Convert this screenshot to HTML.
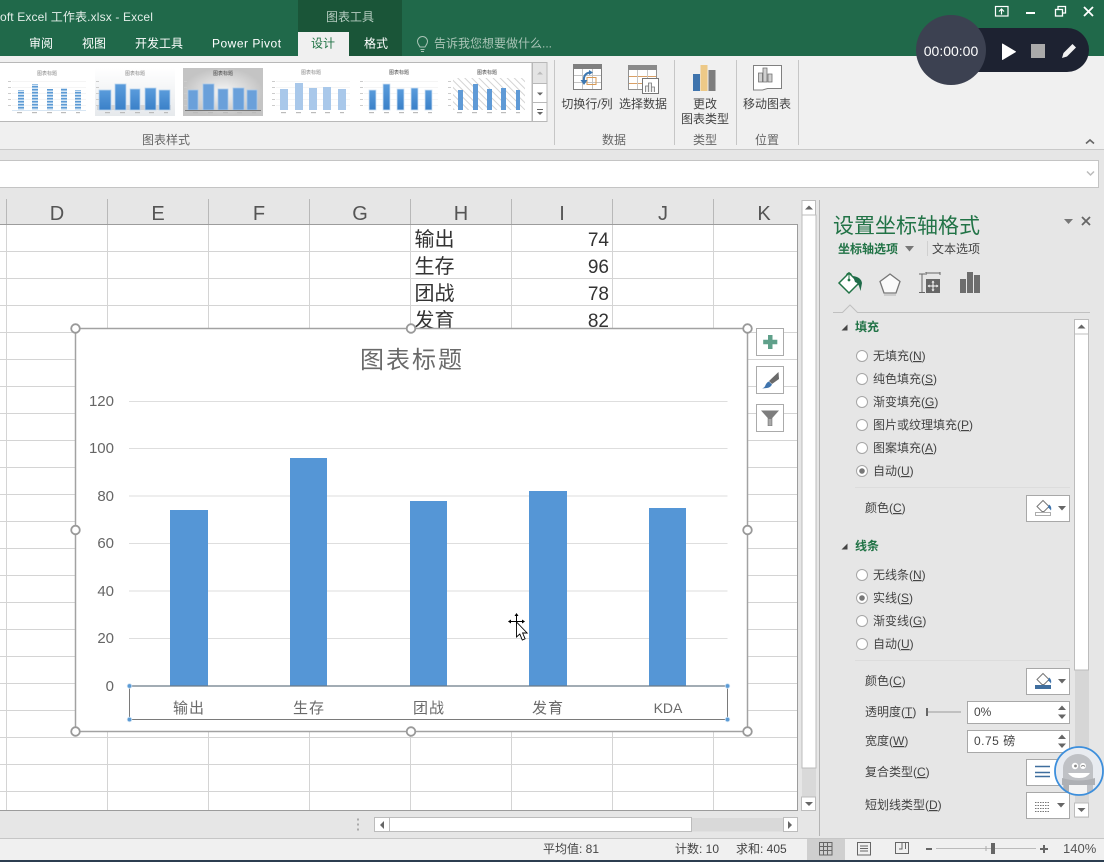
<!DOCTYPE html>
<html lang="zh-CN">
<head>
<meta charset="utf-8">
<title>Excel</title>
<style>
html,body{margin:0;padding:0;width:1104px;height:862px;overflow:hidden;background:#e6e6e6}
svg{display:block}
text{font-family:"Liberation Sans","Noto Sans CJK SC",sans-serif;font-size:12px;fill:#444}
.u{text-decoration:underline}
.b{font-weight:700;fill:#217346}
.h{font-size:20px;fill:#555;text-anchor:middle}
.c{font-size:20px;fill:#333}
.n{font-size:19px;fill:#333;text-anchor:end}
.y{font-size:15px;fill:#666;text-anchor:end}
.x{font-size:15px;fill:#6a6a6a;text-anchor:middle;letter-spacing:1px}
.t{fill:#fff;font-size:12px}
.m{text-anchor:middle}
.g{fill:#666;text-anchor:middle}
.tt{font-size:5px;fill:#888;text-anchor:middle}
</style>
</head>
<body>
<svg width="1104" height="862" viewBox="0 0 1104 862" xmlns="http://www.w3.org/2000/svg">
<defs>
<linearGradient id="bg2" x1="0" y1="0" x2="0" y2="1"><stop offset="0" stop-color="#fff"/><stop offset="1" stop-color="#e6e9ec"/></linearGradient>
<radialGradient id="bg3"><stop offset="0" stop-color="#f6f6f6"/><stop offset="1" stop-color="#c4c4c4"/></radialGradient>
<linearGradient id="bl" x1="0" y1="0" x2="0" y2="1"><stop offset="0" stop-color="#5a9cdc"/><stop offset="1" stop-color="#3a80c8"/></linearGradient>
<pattern id="st" width="3" height="3" patternUnits="userSpaceOnUse"><rect width="3" height="3" fill="#d5e6f5"/><rect width="3" height="1.5" fill="#5c9ad4"/></pattern>
<pattern id="ha" width="5" height="5" patternUnits="userSpaceOnUse" patternTransform="rotate(-45)"><rect width="5" height="5" fill="#fff"/><rect width="1" height="5" fill="#d4d4d4"/></pattern>
<g id="tk"><rect x="10" y="44" width="5" height="1.200" fill="#bbb"/><rect x="25" y="44" width="5" height="1.200" fill="#bbb"/><rect x="40" y="44" width="5" height="1.200" fill="#bbb"/><rect x="54" y="44" width="5" height="1.200" fill="#bbb"/><rect x="69" y="44" width="4" height="1.200" fill="#bbb"/><rect x="1" y="13" width="3" height="1" fill="#ccc"/><rect x="1" y="19" width="3" height="1" fill="#ccc"/><rect x="1" y="25" width="3" height="1" fill="#ccc"/><rect x="1" y="31" width="3" height="1" fill="#ccc"/><rect x="1" y="37" width="3" height="1" fill="#ccc"/></g>
<g id="bkt"><path d="M0 6 L6 0 L12 6 L7 11 L5 11 Z" fill="#fff" stroke="#777" stroke-width="1"/><path d="M12 4 Q15 6 14 10 Q12.500 8 11 7 Z" fill="#3f74ad"/></g>
</defs>

<!-- Title / tabs -->
<rect width="1104" height="56" fill="#20694a"/>
<rect x="298" width="104" height="56" fill="#1a5538"/>
<rect x="298" y="32" width="51" height="24" fill="#f0f0f0"/>
<text x="0" y="21" style="font-size:12px;fill:#e4eee9;letter-spacing:.14px">oft Excel 工作表.xlsx - Excel</text>
<text x="350" y="21" class="m" style="fill:#b5ccc0">图表工具</text>
<text x="29" y="47.500" class="t">审阅</text>
<text x="82" y="47.500" class="t">视图</text>
<text x="135" y="47.500" class="t">开发工具</text>
<text x="212" y="47.500" style="fill:#fff;font-size:12px;letter-spacing:.5px">Power Pivot</text>
<text x="311" y="47.500" style="fill:#217346">设计</text>
<text x="364" y="47.500" class="t">格式</text>
<path d="M420 47c-1-2-2.500-3-2.500-5.500a5 5 0 0 1 10 0c0 2.500-1.500 3.500-2.500 5.500zM420.500 49.500h4M421 51.500h3" fill="none" stroke="#a9c4b6" stroke-width="1"/>
<text x="434" y="47.500" style="fill:#a9c4b6">告诉我您想要做什么...</text>

<!-- Window controls -->
<g fill="none" stroke="#fff" stroke-width="1.200">
<rect x="995.500" y="6.500" width="12.500" height="9.500"/>
<path d="M1001.500 14.500v-5M999 11.500l2.500-2.500 2.500 2.500"/>
</g>
<path d="M1026 13h9" stroke="#fff" stroke-width="2"/>
<g fill="none" stroke="#fff" stroke-width="1.300"><rect x="1055.500" y="9.500" width="7" height="6.500"/><path d="M1058 9V6.500h7.500V13h-3"/></g>
<path d="M1084 7l9 9M1093 7l-9 9" stroke="#fff" stroke-width="1.800" fill="none"/>

<!-- Ribbon -->
<rect y="56" width="1104" height="94" fill="#f0f0f0"/>
<rect y="149" width="1104" height="1" fill="#c9c9c9"/>
<rect y="150" width="1104" height="50" fill="#e6e6e6"/>
<rect x="-2" y="160.500" width="1100.500" height="27" fill="#fff" stroke="#c4c4c4"/>
<path d="M1087 171.500l3.500 3.500 3.500-3.500" fill="none" stroke="#bbb" stroke-width="1.500"/>

<rect x="-2" y="62.500" width="534" height="59" fill="#fff" stroke="#b8b8b8"/>
<!-- thumb 1 -->
<g transform="translate(7 68)"><rect width="80" height="48" fill="#fff"/><path d="M5 13.500h74M5 19.500h74M5 25.500h74M5 31.500h74M5 37.500h74" stroke="#f5f5f5"/><text x="40" y="7" class="tt">图表标题</text>
<rect x="11" y="22" width="6" height="20" fill="url(#st)"/><rect x="25" y="16" width="6" height="26" fill="url(#st)"/><rect x="40" y="21" width="6" height="21" fill="url(#st)"/><rect x="54" y="20" width="6" height="22" fill="url(#st)"/><rect x="68" y="22" width="6" height="20" fill="url(#st)"/><rect x="5" y="42" width="74" height=".8" fill="#cfe0f0"/><use href="#tk"/></g>
<!-- thumb 2 -->
<g transform="translate(95 68)"><rect width="80" height="48" fill="url(#bg2)"/><rect x="2" y="37" width="74" height="5" fill="#c4c4c4" opacity=".6"/>
<text x="40" y="7" class="tt">图表标题</text>
<g stroke="#b9d4ee" stroke-width=".8"><rect x="4" y="22" width="12" height="20" fill="url(#bl)"/><rect x="20" y="16" width="11" height="26" fill="url(#bl)"/><rect x="35" y="21" width="10" height="21" fill="url(#bl)"/><rect x="50" y="20" width="11" height="22" fill="url(#bl)"/><rect x="64" y="22" width="11" height="20" fill="url(#bl)"/></g><use href="#tk"/></g>
<!-- thumb 3 -->
<g transform="translate(183 68)"><rect width="80" height="48" fill="url(#bg3)"/><text x="40" y="7" class="tt" style="fill:#444">图表标题</text>
<g stroke="#a9c9ea" stroke-width=".8"><rect x="5" y="22" width="10" height="20" fill="#6aa0da"/><rect x="20" y="16" width="11" height="26" fill="#6aa0da"/><rect x="35" y="21" width="10" height="21" fill="#6aa0da"/><rect x="50" y="20" width="11" height="22" fill="#6aa0da"/><rect x="64" y="22" width="10" height="20" fill="#6aa0da"/></g><rect x="2" y="42" width="76" height="1" fill="#777"/><use href="#tk"/></g>
<!-- thumb 4 -->
<g transform="translate(271 68)"><rect width="80" height="48" fill="#fff"/><path d="M5 13.500h74M5 19.500h74M5 25.500h74M5 31.500h74M5 37.500h74" stroke="#f5f5f5"/><text x="40" y="6" class="tt">图表标题</text>
<rect x="9" y="21" width="8" height="21" fill="#a9c8ea"/><rect x="24" y="15" width="8" height="27" fill="#a9c8ea"/><rect x="38" y="20" width="8" height="22" fill="#a9c8ea"/><rect x="52" y="19" width="8" height="23" fill="#a9c8ea"/><rect x="67" y="21" width="8" height="21" fill="#a9c8ea"/><use href="#tk"/></g>
<!-- thumb 5 -->
<g transform="translate(359 68)"><rect width="80" height="48" fill="#fff"/><path d="M5 13.500h74M5 19.500h74M5 25.500h74M5 31.500h74M5 37.500h74" stroke="#f5f5f5"/><text x="40" y="6" class="tt" style="fill:#444">图表标题</text>
<g stroke="#cfe2f4" stroke-width=".8"><rect x="10" y="22" width="7" height="20" fill="url(#bl)"/><rect x="24" y="16" width="7" height="26" fill="url(#bl)"/><rect x="38" y="21" width="7" height="21" fill="url(#bl)"/><rect x="52" y="20" width="7" height="22" fill="url(#bl)"/><rect x="66" y="22" width="7" height="20" fill="url(#bl)"/></g><use href="#tk"/></g>
<!-- thumb 6 -->
<g transform="translate(447 68)"><rect width="80" height="48" fill="#fff"/><rect x="6" y="10" width="72" height="32" fill="url(#ha)"/><text x="40" y="6" class="tt" style="fill:#444">图表标题</text>
<rect x="11" y="22" width="5" height="20" fill="#5f9ad6"/><rect x="26" y="16" width="5" height="26" fill="#5f9ad6"/><rect x="40" y="21" width="5" height="21" fill="#5f9ad6"/><rect x="54" y="20" width="5" height="22" fill="#5f9ad6"/><rect x="69" y="22" width="4" height="20" fill="#5f9ad6"/><use href="#tk"/></g>

<rect x="532.500" y="62.500" width="14.500" height="21" fill="#e4e4e4" stroke="#b8b8b8"/>
<rect x="532.500" y="83.500" width="14.500" height="19" fill="#fff" stroke="#b8b8b8"/>
<rect x="532.500" y="102.500" width="14.500" height="19" fill="#fff" stroke="#b8b8b8"/>
<path d="M537 74.500l3-3 3 3z" fill="#bbb"/><path d="M537 92.500h6l-3 3z" fill="#666"/><path d="M537 109.500h6" stroke="#666"/><path d="M537 112h6l-3 3z" fill="#666"/>
<text x="166" y="144" class="g">图表样式</text>

<path d="M554.500 60v85M674.500 60v85M736.500 60v85M798.500 60v85" stroke="#c6c6c6"/>
<!-- icon: switch -->
<rect x="573.500" y="64.500" width="28" height="25" fill="#fff" stroke="#808080"/><rect x="573" y="64" width="29" height="5" fill="#7f7f7f"/>
<path d="M574 75.500h27M574 82.500h27M582.500 69v20M592.500 69v20" stroke="#c4c4c4"/><path d="M587 77.500h9v7h-9z" fill="none" stroke="#d99a55"/>
<path d="M590 72.500q-7 1-6 9" fill="none" stroke="#3d77b0" stroke-width="2"/><path d="M580.500 80l3.500 5 3.500-5zM589 70v5l4-2.500z" fill="#3d77b0"/>
<!-- icon: select data -->
<rect x="628.500" y="65.500" width="28" height="24" fill="#fff" stroke="#909090"/><rect x="628" y="65" width="29" height="5" fill="#8a8a8a"/>
<path d="M629 76.500h27M629 83.500h27" stroke="#d9a066"/><path d="M637.500 70v19M647.500 70v19" stroke="#c6c6c6"/>
<rect x="642.500" y="78.500" width="16" height="15" fill="#fff" stroke="#777"/><path d="M645.500 92v-6h3v6M648.500 92v-9h3v9M651.500 92v-5h3v5" fill="#eee" stroke="#777" stroke-width=".8"/>
<!-- icon: change type -->
<rect x="693" y="74" width="7" height="17" fill="#3f74ad"/><rect x="700.500" y="65" width="7" height="26" fill="#edc987"/><rect x="708.500" y="70" width="7" height="21" fill="#7d7d7d"/>
<!-- icon: move chart -->
<path d="M753.500 65.500h28v23h-14l-5 1.500h-9z" fill="#fff" stroke="#808080"/><path d="M758.500 82v-9h4v9zM763 82V68h4v14zM768 82v-8h4v8z" fill="#d0d0d0" stroke="#707070" stroke-width=".8"/>

<text x="587" y="108" class="m">切换行/列</text>
<text x="643" y="108" class="m">选择数据</text>
<text x="705" y="108" class="m">更改</text>
<text x="705" y="123" class="m">图表类型</text>
<text x="767" y="108" class="m">移动图表</text>
<text x="614" y="144" class="g">数据</text>
<text x="705" y="144" class="g">类型</text>
<text x="767" y="144" class="g">位置</text>
<path d="M1086 143.500l4-3.500 4 3.500" fill="none" stroke="#666" stroke-width="1.600"/>

<!-- Sheet grid -->
<rect x="0" y="224" width="797.500" height="586" fill="#fff"/>
<path d="M0 251.500h797M0 278.500h797M0 305.500h797M0 332.500h797M0 359.500h797M0 386.500h797M0 413.500h797M0 440.500h797M0 467.500h797M0 494.500h797M0 521.500h797M0 548.500h797M0 575.500h797M0 602.500h797M0 629.500h797M0 656.500h797M0 683.500h797M0 710.500h797M0 737.500h797M0 764.500h797M0 791.500h797M6.500 224v586M107.500 224v586M208.500 224v586M309.500 224v586M410.500 224v586M511.500 224v586M612.500 224v586M713.500 224v586" stroke="#d4d4d4"/>
<path d="M6.500 199v25M107.500 199v25M208.500 199v25M309.500 199v25M410.500 199v25M511.500 199v25M612.500 199v25M713.500 199v25" stroke="#b8b8b8"/>
<path d="M0 224.500h797.500V810.500H0" fill="none" stroke="#9c9c9c"/>
<text x="57" y="220" class="h">D</text><text x="158" y="220" class="h">E</text><text x="259" y="220" class="h">F</text><text x="360" y="220" class="h">G</text><text x="461" y="220" class="h">H</text><text x="562" y="220" class="h">I</text><text x="663" y="220" class="h">J</text><text x="764" y="220" class="h">K</text>
<text x="414.500" y="246" class="c">输出</text><text x="414.500" y="273" class="c">生存</text><text x="414.500" y="300" class="c">团战</text><text x="414.500" y="327" class="c">发育</text>
<text x="609" y="246" class="n">74</text><text x="609" y="273" class="n">96</text><text x="609" y="300" class="n">78</text><text x="609" y="327" class="n">82</text>

<!-- Chart -->
<rect x="75.500" y="328.500" width="672" height="403" fill="#fff" stroke="#a2a2a2" stroke-width="1.500"/>
<path d="M129 401.500h598.500M129 448.500h598.500M129 496h598.500M129 543.500h598.500M129 591h598.500M129 638.500h598.500" stroke="#dedede"/>
<text x="412" y="368" style="font-size:24px;fill:#6a6a6a;text-anchor:middle;letter-spacing:2px">图表标题</text>
<text x="114" y="406" class="y">120</text><text x="114" y="453" class="y">100</text><text x="114" y="501" class="y">80</text><text x="114" y="548" class="y">60</text><text x="114" y="596" class="y">40</text><text x="114" y="643" class="y">20</text><text x="114" y="691" class="y">0</text>
<g fill="#5596d6"><rect x="170" y="510" width="38" height="176"/><rect x="290" y="458" width="37" height="228"/><rect x="410" y="501" width="37" height="185"/><rect x="529" y="491" width="38" height="195"/><rect x="649" y="508" width="37" height="178"/></g>
<rect x="129.500" y="686" width="598" height="33.500" fill="none" stroke="#7a7a7a"/>
<path d="M129 686h599" stroke="#6b7a88" stroke-width="1.200"/>
<g fill="#5b9bd5" stroke="#cfe2f3" stroke-width=".8"><circle cx="129.500" cy="686" r="2.300"/><circle cx="727.500" cy="686" r="2.300"/><circle cx="129.500" cy="719.500" r="2.300"/><circle cx="727.500" cy="719.500" r="2.300"/></g>
<text x="189" y="713" class="x">输出</text><text x="309" y="713" class="x">生存</text><text x="429" y="713" class="x">团战</text><text x="548" y="713" class="x">发育</text><text x="668" y="713" style="font-size:14px;fill:#6a6a6a;text-anchor:middle">KDA</text>
<g fill="#fff" stroke="#999" stroke-width="1.800"><circle cx="75.500" cy="328.500" r="4.300"/><circle cx="411" cy="328.500" r="4.300"/><circle cx="747.500" cy="328.500" r="4.300"/><circle cx="75.500" cy="530" r="4.300"/><circle cx="747.500" cy="530" r="4.300"/><circle cx="75.500" cy="731.500" r="4.300"/><circle cx="411" cy="731.500" r="4.300"/><circle cx="747.500" cy="731.500" r="4.300"/></g>

<!-- Chart side buttons -->
<g fill="#fff" stroke="#ababab"><rect x="756.500" y="328.500" width="27" height="27"/><rect x="756.500" y="366.500" width="27" height="27"/><rect x="756.500" y="404.500" width="27" height="27"/></g>
<path d="M768 335h4.500v4.800h4.800v4.400h-4.800v4.800H768v-4.800h-4.800v-4.400h4.800z" fill="#5fa08a"/>
<path d="M778.500 372l.5 7-7 5-3-3z" fill="#6a6a6a"/><path d="M769 381.500l3 3q-1.500 3-5 3.500l-5 .5q3-1 3.500-3.500 1.500-3 3.500-3.500z" fill="#3f74ad"/>
<path d="M761 410.500h18l-6.700 7.500v8h-4.600v-8z" fill="#7d7d7d"/><path d="M768.500 419v6.500h3V419" fill="#aaa"/>

<!-- Cursor -->
<path d="M516.500 614v12M508.500 621.500h16" stroke="#000" stroke-width="1"/>
<path d="M516.500 613l-2 3h4zM508 621.500l3-2v4zM525 621.500l-3-2v4z" fill="#000"/>
<path d="M516.500 622v15l3.300-3 2.500 6 2.800-1.200-2.500-5.800h4.500z" fill="#fff" stroke="#000" stroke-width=".9"/>

<!-- V scrollbar -->
<rect x="802" y="200" width="14" height="610" fill="#d9d9d9"/>
<rect x="802" y="215" width="14" height="553" fill="#fff" stroke="#bcbcbc"/>
<rect x="802" y="200.500" width="13.500" height="14.500" fill="#fff" stroke="#bcbcbc"/>
<rect x="801.500" y="797" width="14" height="13.500" fill="#fff" stroke="#bcbcbc"/>
<path d="M805 209.500l4-4 4 4z" fill="#666"/><path d="M805 802h8l-4 4z" fill="#666"/>

<!-- Bottom bars -->
<rect y="811" width="819" height="27" fill="#e6e6e6"/>
<rect y="838" width="1104" height="22" fill="#f0f0f0"/>
<rect y="838" width="1104" height="1" fill="#c6c6c6"/>
<path d="M358 818.500v2M358 823.500v2M358 828.500v2" stroke="#aaa" stroke-width="2"/>
<rect x="375" y="818" width="422.500" height="13.500" fill="#d9d9d9"/>
<rect x="389.500" y="817.500" width="302" height="14" fill="#fff" stroke="#bcbcbc"/>
<rect x="374.500" y="817.500" width="15" height="14" fill="#fff" stroke="#bcbcbc"/>
<rect x="783.500" y="817.500" width="14" height="14" fill="#fff" stroke="#bcbcbc"/>
<path d="M384 821v8l-4-4z" fill="#666"/><path d="M788 821v8l4-4z" fill="#666"/>

<!-- Panel -->
<rect x="820" y="199" width="284" height="639" fill="#e6e6e6"/>
<path d="M819.500 200v636" stroke="#b4b4b4"/>
<text x="833" y="233" style="font-size:21px;fill:#217346">设置坐标轴格式</text>
<path d="M1064 219h9l-4.500 5z" fill="#777"/><path d="M1082 217l8 8M1090 217l-8 8" stroke="#666" stroke-width="1.800"/>
<text x="838" y="253" class="b">坐标轴选项</text>
<path d="M905 246h9l-4.500 5.500z" fill="#777"/><path d="M927.500 241v15" stroke="#d0d0d0"/>
<text x="932" y="253">文本选项</text>

<!-- Panel tab icons -->
<path d="M839 283l10-10 10 10-10 10z" fill="#fff" stroke="#217346" stroke-width="1.500"/>
<path d="M849 272v7" stroke="#217346"/><circle cx="849" cy="280" r="1.400" fill="#217346"/><path d="M846.500 275a2.600 2.600 0 0 1 5 0" fill="none" stroke="#217346"/>
<path d="M853 276q8 1 9 7l-1.500 8-1.500-5q-1-3-4-4z" fill="#1f6b49"/>
<path d="M890 274l10 7.500-4 11.500h-12l-4-11.500z" fill="#fafafa" stroke="#777" stroke-width="1.300"/><path d="M884 295h12" stroke="#ccc" stroke-width="2"/>
<path d="M919 274h6M919 292.500h6M922 274v18.500M926 273h14M926 272v3M940 272v3" fill="none" stroke="#666"/>
<rect x="926" y="279" width="14" height="14" fill="#666"/><path d="M933 281.500v9M928.500 286h9" stroke="#fff"/><path d="M933 280.500l-1.500 2h3zM933 291.500l-1.500-2h3zM927.500 286l2-1.500v3zM938.500 286l-2-1.500v3z" fill="#fff"/>
<path d="M960 279h6v14h-6zM967 272h6v21h-6zM974 275h6v18h-6z" fill="#6d6d6d"/>
<path d="M833 312.500h9.500l7.500-7.500 7.500 7.500H1090" fill="none" stroke="#c0c0c0"/>

<!-- Panel scrollbar -->
<rect x="1075" y="320" width="14" height="498" fill="#d6d6d6"/>
<rect x="1074.500" y="334" width="14" height="336" fill="#fff" stroke="#bcbcbc"/>
<rect x="1074.500" y="319.500" width="14" height="14.500" fill="#fff" stroke="#bcbcbc"/>
<rect x="1074.500" y="803" width="14" height="14" fill="#fff" stroke="#bcbcbc"/>
<path d="M1077.500 328.500l4-4 4 4z" fill="#666"/><path d="M1077.500 808h8l-4 4z" fill="#666"/>

<!-- Fill section -->
<path d="M841.500 330.500h6v-6z" fill="#444"/>
<text x="855" y="331" class="b">填充</text>
<g fill="#fff" stroke="#a6a6a6"><circle cx="862" cy="356" r="5.500"/><circle cx="862" cy="379" r="5.500"/><circle cx="862" cy="402" r="5.500"/><circle cx="862" cy="425" r="5.500"/><circle cx="862" cy="448" r="5.500"/><circle cx="862" cy="471" r="5.500"/><circle cx="862" cy="575" r="5.500"/><circle cx="862" cy="598" r="5.500"/><circle cx="862" cy="621" r="5.500"/><circle cx="862" cy="644" r="5.500"/></g>
<circle cx="862" cy="471" r="2.800" fill="#777"/><circle cx="862" cy="598" r="2.800" fill="#777"/>
<text x="873" y="360">无填充(<tspan class="u">N</tspan>)</text>
<text x="873" y="383">纯色填充(<tspan class="u">S</tspan>)</text>
<text x="873" y="406">渐变填充(<tspan class="u">G</tspan>)</text>
<text x="873" y="429">图片或纹理填充(<tspan class="u">P</tspan>)</text>
<text x="873" y="452">图案填充(<tspan class="u">A</tspan>)</text>
<text x="873" y="475">自动(<tspan class="u">U</tspan>)</text>
<path d="M855 487.500h215M855 660.500h215" stroke="#dcdcdc"/>
<text x="865" y="512">颜色(<tspan class="u">C</tspan>)</text>
<rect x="1026.500" y="495.500" width="43" height="26" fill="#fff" stroke="#a8a8a8"/>
<use href="#bkt" transform="translate(1037 500.500)"/><rect x="1035.500" y="512.500" width="15" height="3" fill="#fff" stroke="#999" stroke-width=".8"/>
<path d="M1058 506h8l-4 4.500z" fill="#666"/>

<!-- Line section -->
<path d="M841.500 549.500h6v-6z" fill="#444"/>
<text x="855" y="550" class="b">线条</text>
<text x="873" y="579">无线条(<tspan class="u">N</tspan>)</text>
<text x="873" y="602">实线(<tspan class="u">S</tspan>)</text>
<text x="873" y="625">渐变线(<tspan class="u">G</tspan>)</text>
<text x="873" y="648">自动(<tspan class="u">U</tspan>)</text>
<text x="865" y="685">颜色(<tspan class="u">C</tspan>)</text>
<rect x="1026.500" y="668.500" width="43" height="26" fill="#fff" stroke="#a8a8a8"/>
<use href="#bkt" transform="translate(1037 673.500)"/><rect x="1035" y="685" width="16" height="4" fill="#3f6e9e"/>
<path d="M1058 679h8l-4 4.500z" fill="#666"/>
<text x="865" y="716">透明度(<tspan class="u">T</tspan>)</text>
<path d="M927 708v8" stroke="#666" stroke-width="2"/><path d="M928 712h33" stroke="#999"/>
<rect x="967.500" y="701.500" width="102" height="22" fill="#fff" stroke="#a8a8a8"/>
<text x="974" y="716">0%</text>
<path d="M1058 710l4-4.500 4 4.500zM1058 714.500h8l-4 4.500z" fill="#666"/>
<text x="865" y="745">宽度(<tspan class="u">W</tspan>)</text>
<rect x="967.500" y="730.500" width="102" height="22" fill="#fff" stroke="#a8a8a8"/>
<text x="974" y="745" style="letter-spacing:.5px">0.75 磅</text>
<path d="M1058 739l4-4.500 4 4.500zM1058 743.500h8l-4 4.500z" fill="#666"/>
<text x="865" y="776">复合类型(<tspan class="u">C</tspan>)</text>
<rect x="1026.500" y="759.500" width="43" height="26" fill="#fff" stroke="#a8a8a8"/>
<path d="M1035 766.500h15M1035 772.500h15M1035 776.500h15" stroke="#3f6e9e" stroke-width="1.500"/>
<text x="865" y="809">短划线类型(<tspan class="u">D</tspan>)</text>
<rect x="1026.500" y="792.500" width="43" height="26" fill="#fff" stroke="#a8a8a8"/>
<path d="M1035 802.500h15M1035 805.500h15M1035 808.500h15M1035 811.500h15" stroke="#777" stroke-dasharray="1.500 1"/>
<path d="M1057 803h8l-4 4.500z" fill="#666"/>

<!-- Avatar -->
<clipPath id="av"><circle cx="1079" cy="771" r="23.500"/></clipPath>
<g clip-path="url(#av)"><rect x="1050" y="745" width="60" height="55" fill="#e8ebf0"/>
<path d="M1063 800v-32a15 14 0 0 1 30 0v32z" fill="#bfc1c5"/>
<circle cx="1075" cy="766" r="3.200" fill="#fff"/><circle cx="1083" cy="766" r="3" fill="#fff"/><circle cx="1075.500" cy="766" r="1.400" fill="#888"/><path d="M1081 766.500q2-2 4 0" stroke="#888" fill="none"/>
<path d="M1068 773h22q-3 5-11 5t-11-5z" fill="#fff"/>
<path d="M1062 778q17 5 33 0v7h-33z" fill="#aeb0b4"/><rect x="1068" y="785" width="19" height="12" fill="#f4f4f4"/><rect x="1064" y="785" width="5" height="10" fill="#aeb0b4"/></g>
<circle cx="1079" cy="771" r="24" fill="none" stroke="#3d8fdc" stroke-width="1.800"/>

<!-- Status bar -->
<text x="543" y="853">平均值: 81</text>
<text x="675" y="853">计数: 10</text>
<text x="736" y="853">求和: 405</text>
<rect x="807" y="839" width="38" height="21" fill="#cfcfcf"/>
<g fill="none" stroke="#666"><rect x="819.500" y="842.500" width="12.500" height="12.500"/><path d="M823.500 843v12M827.500 843v12M820 846.500h12M820 850.500h12"/>
<rect x="857.500" y="842.500" width="13" height="12.500"/><path d="M860 846h8M860 848.500h8M860 851h8"/>
<path d="M895.500 842.500h13v11h-13zM902 843v6h-3M905.500 843v6"/></g>
<path d="M926 849h6" stroke="#666" stroke-width="2"/><path d="M936 848.500h100" stroke="#bbb"/><rect x="991" y="843" width="4" height="11" fill="#666"/><path d="M986 846v5" stroke="#aaa"/>
<path d="M1040 849h8M1044 845v8" stroke="#666" stroke-width="2"/>
<text x="1063" y="853" style="font-size:13px;fill:#555">140%</text>
<rect y="860" width="1104" height="2" fill="#2c3e50"/>

<!-- Recorder -->
<rect x="940" y="28" width="149" height="44" rx="22" fill="#1d2231"/>
<circle cx="951" cy="50" r="35" fill="#3c4151"/>
<text x="951" y="56" style="font-size:14px;fill:#fff;text-anchor:middle">00:00:00</text>
<path d="M1002.500 44v15.500l13-7.750z" fill="#fff" stroke="#fff" stroke-linejoin="round"/>
<rect x="1031" y="44" width="14" height="14" fill="#aaa"/>
<path d="M1062 58l1.500-5 9-9 3.500 3.500-9 9z" fill="#f2f2f2"/>
</svg>
</body>
</html>
